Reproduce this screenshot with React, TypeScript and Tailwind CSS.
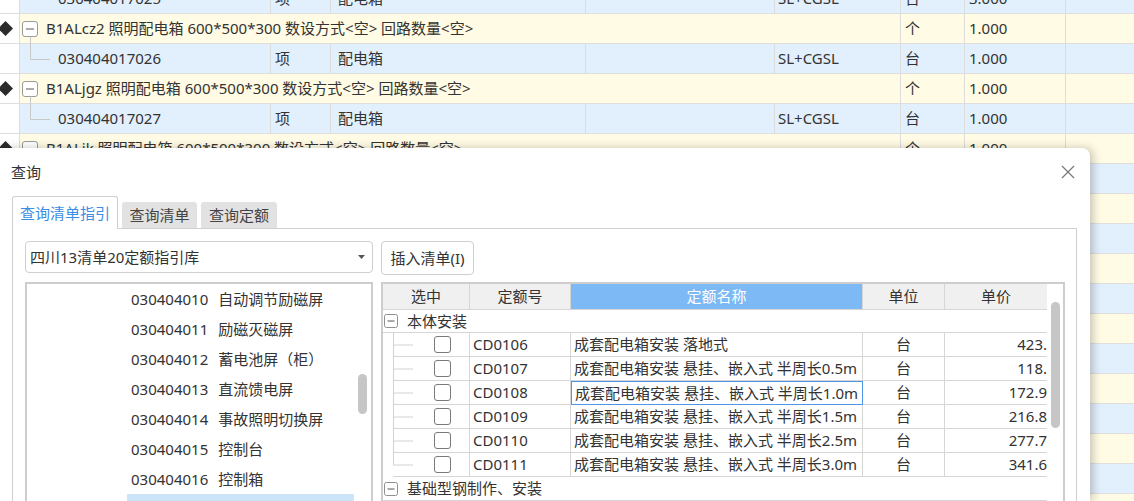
import React from 'react';

type BgRow =
  | { t: 'i'; code: string; qty: string }
  | { t: 'g'; name: string; qty: string };

const bgRows: BgRow[] = [
  { t: 'i', code: '030404017025', qty: '3.000' },
  { t: 'g', name: 'B1ALcz2 照明配电箱 600*500*300 数设方式<空> 回路数量<空>', qty: '1.000' },
  { t: 'i', code: '030404017026', qty: '1.000' },
  { t: 'g', name: 'B1ALjgz 照明配电箱 600*500*300 数设方式<空> 回路数量<空>', qty: '1.000' },
  { t: 'i', code: '030404017027', qty: '1.000' },
  { t: 'g', name: 'B1ALjk 照明配电箱 600*500*300 数设方式<空> 回路数量<空>', qty: '1.000' },
  { t: 'i', code: '', qty: '' },
  { t: 'g', name: '', qty: '' },
  { t: 'i', code: '', qty: '' },
  { t: 'g', name: '', qty: '' },
  { t: 'i', code: '', qty: '' },
  { t: 'g', name: '', qty: '' },
  { t: 'i', code: '', qty: '' },
  { t: 'g', name: '', qty: '' },
  { t: 'i', code: '', qty: '' },
  { t: 'g', name: '', qty: '' },
  { t: 'i', code: '', qty: '' },
  { t: 'g', name: '', qty: '' },
];

const listItems = [
  ['030404010', '自动调节励磁屏'],
  ['030404011', '励磁灭磁屏'],
  ['030404012', '蓄电池屏（柜）'],
  ['030404013', '直流馈电屏'],
  ['030404014', '事故照明切换屏'],
  ['030404015', '控制台'],
  ['030404016', '控制箱'],
  ['030404017', '配电箱'],
];

const gridRows = [
  ['CD0106', '成套配电箱安装 落地式', '台', '423.'],
  ['CD0107', '成套配电箱安装 悬挂、嵌入式 半周长0.5m', '台', '118.'],
  ['CD0108', '成套配电箱安装 悬挂、嵌入式 半周长1.0m', '台', '172.9'],
  ['CD0109', '成套配电箱安装 悬挂、嵌入式 半周长1.5m', '台', '216.8'],
  ['CD0110', '成套配电箱安装 悬挂、嵌入式 半周长2.5m', '台', '277.7'],
  ['CD0111', '成套配电箱安装 悬挂、嵌入式 半周长3.0m', '台', '341.6'],
];

function GroupBox() {
  return (
    <svg width="16" height="30" className="shrink-0">
      <rect x="0.5" y="7.5" width="15" height="15" rx="2.5" fill="white" stroke="#9a9a9a" />
      <line x1="4" y1="15" x2="12" y2="15" stroke="#555" strokeWidth="1" />
      <line x1="8.5" y1="22.5" x2="8.5" y2="30" stroke="#c9c9c9" strokeWidth="1" />
    </svg>
  );
}

function ItemTree() {
  return (
    <svg width="38" height="29" className="shrink-0">
      <line x1="10.5" y1="0" x2="10.5" y2="15.5" stroke="#c9c9c9" strokeWidth="1" />
      <line x1="10.5" y1="15.5" x2="30" y2="15.5" stroke="#c9c9c9" strokeWidth="1" />
    </svg>
  );
}

function Diamond() {
  return (
    <svg width="19" height="29" className="shrink-0">
      <polygon points="-2,14.5 5.5,7 13,14.5 5.5,22" fill="#2b2b2b" />
    </svg>
  );
}

function BackgroundTable() {
  return (
    <div className="-mt-[16px] flex flex-col">
      {bgRows.map((r, i) => {
        if (r.t === 'g') {
          return (
            <div key={i} className="flex h-[30px] border-b border-[#dedede] bg-[#fffbe4] text-[#333]">
              <div className="flex w-[20px] shrink-0 items-center border-r border-[#dcdcdc] bg-white">
                <Diamond />
              </div>
              <div className="flex w-[881px] shrink-0 items-center border-r border-[#dcdcdc] pl-[2px]">
                <GroupBox />
                <span className="ml-[8px] whitespace-pre">{r.name}</span>
              </div>
              <div className="flex w-[64px] shrink-0 items-center border-r border-[#dcdcdc] pl-[4px]">{r.qty ? '个' : ''}</div>
              <div className="flex w-[101px] shrink-0 items-center border-r border-[#dcdcdc] pl-[4px]">{r.qty}</div>
              <div className="flex-1" />
            </div>
          );
        }
        return (
          <div key={i} className="flex h-[30px] border-b border-[#dedede] bg-[#e2effc] text-[#333]">
            <div className="w-[20px] shrink-0 border-r border-[#dcdcdc] bg-white" />
            <div className="flex w-[251px] shrink-0 items-center border-r border-[#dcdcdc]">
              <ItemTree />
              <span>{r.code}</span>
            </div>
            <div className="flex w-[60px] shrink-0 items-center border-r border-[#dcdcdc] pl-[4px]">{r.code ? '项' : ''}</div>
            <div className="flex w-[255px] shrink-0 items-center border-r border-[#dcdcdc] pl-[7px]">{r.code ? '配电箱' : ''}</div>
            <div className="w-[189px] shrink-0 border-r border-[#dcdcdc]" />
            <div className="flex w-[126px] shrink-0 items-center border-r border-[#dcdcdc] pl-[3px]">{r.code ? 'SL+CGSL' : ''}</div>
            <div className="flex w-[64px] shrink-0 items-center border-r border-[#dcdcdc] pl-[4px]">{r.code ? '台' : ''}</div>
            <div className="flex w-[101px] shrink-0 items-center border-r border-[#dcdcdc] pl-[4px]">{r.qty}</div>
            <div className="flex-1" />
          </div>
        );
      })}
    </div>
  );
}

function SmallBox() {
  return (
    <svg width="14" height="14" className="shrink-0">
      <rect x="0.5" y="0.5" width="13" height="13" rx="2" fill="white" stroke="#8f8f8f" />
      <line x1="3.5" y1="7" x2="10.5" y2="7" stroke="#555" strokeWidth="1" />
    </svg>
  );
}

function RowTree({ last }: { last: boolean }) {
  return (
    <svg width="20" height="23" className="shrink-0">
      <line x1="0.5" y1="0" x2="0.5" y2={last ? 12 : 24} stroke="#d2d2d2" strokeWidth="1" />
      <line x1="0.5" y1="12" x2="20" y2="12" stroke="#d2d2d2" strokeWidth="1" />
    </svg>
  );
}

function Dialog() {
  return (
    <div className="absolute left-0 top-[148px] h-[353px] w-[1090px] overflow-hidden rounded-tr-[8px] bg-white text-[#333] shadow-[3px_0_10px_rgba(0,0,0,0.22)]">
      {/* header */}
      <div className="flex h-[48px] items-center justify-between pl-[11px] pr-[15px]">
        <span className="text-[15px]">查询</span>
        <svg width="14" height="14" viewBox="0 0 14 14">
          <line x1="1" y1="1" x2="13" y2="13" stroke="#7a7a7a" strokeWidth="1.3" />
          <line x1="13" y1="1" x2="1" y2="13" stroke="#7a7a7a" strokeWidth="1.3" />
        </svg>
      </div>
      {/* tabs */}
      <div className="flex h-[32px] items-end gap-[4px] pl-[12px]">
        <div className="relative z-10 -mb-[1px] flex h-[33px] w-[106px] items-center justify-center rounded-t-[3px] border border-b-0 border-[#cfcfcf] bg-white text-[#3a8ee6]">
          查询清单指引
        </div>
        <div className="flex h-[26px] w-[75px] items-center justify-center rounded-t-[3px] bg-[#e2e2e2] text-[#444]">
          查询清单
        </div>
        <div className="flex h-[26px] w-[76px] items-center justify-center rounded-t-[3px] bg-[#e2e2e2] text-[#444]">
          查询定额
        </div>
      </div>
      {/* panel */}
      <div className="ml-[12px] mr-[13px] h-[300px] border border-[#cfcfcf] p-[12px]">
        <div className="flex items-start gap-[8px]">
          <div className="flex h-[32px] w-[348px] items-center justify-between rounded-[4px] border border-[#cfcfcf] pl-[4px] pr-[7px]">
            <span>四川13清单20定额指引库</span>
            <svg width="7" height="4" viewBox="0 0 7 4">
              <polygon points="0,0 7,0 3.5,4" fill="#555" />
            </svg>
          </div>
          <div className="flex h-[34px] w-[93px] items-center justify-center rounded-[4px] border border-[#cfcfcf] bg-white">
            插入清单(I)
          </div>
        </div>
        <div className="mt-[7px] flex h-[240px] gap-[8px]">
          {/* left list */}
          <div className="flex w-[348px] shrink-0 border-2 border-[#cdcdcd]">
            <div className="flex flex-1 flex-col pl-[100px]">
              {listItems.map(([c, n], i) => (
                <div
                  key={c}
                  className={`flex h-[30px] shrink-0 items-center pl-[4px] ${i === 7 ? 'bg-[#cce4f8]' : ''}`}
                >
                  <span>{c}</span>
                  <span className="ml-[10px]">{n}</span>
                </div>
              ))}
            </div>
            <div className="w-[17px] shrink-0 pl-[4px] pt-[90px]">
              <div className="h-[40px] w-[9px] rounded-full bg-[#c6c6c6]" />
            </div>
          </div>
          {/* grid */}
          <div className="flex w-[684px] shrink-0 border-2 border-[#cdcdcd]">
            <div className="flex w-[664px] shrink-0 flex-col">
              <div className="flex h-[26px] shrink-0 border-b border-[#d6d6d6] bg-[#f0f0f0]">
                <div className="flex w-[87px] items-center justify-center border-r border-[#d6d6d6]">选中</div>
                <div className="flex w-[101px] items-center justify-center border-r border-[#d6d6d6]">定额号</div>
                <div className="flex w-[292px] items-center justify-center border-r border-[#d6d6d6] bg-[#7db9f5] text-white">定额名称</div>
                <div className="flex w-[82px] items-center justify-center border-r border-[#d6d6d6]">单位</div>
                <div className="flex w-[102px] items-center justify-center">单价</div>
              </div>
              <div className="flex h-[23px] shrink-0 items-center border-b border-[#d6d6d6] pl-[1px]">
                <SmallBox />
                <span className="ml-[9px]">本体安装</span>
              </div>
              {gridRows.map(([code, name, unit, price], i) => (
                <div key={code} className="flex h-[24px] shrink-0">
                  <div className="flex w-[87px] shrink-0 border-r border-[#d6d6d6] pl-[10px]">
                    <div className="flex flex-1 items-center border-b border-[#d6d6d6]">
                      <RowTree last={i === gridRows.length - 1} />
                      <div className="ml-[21px] h-[17px] w-[17px] rounded-[3px] border border-[#7a7a7a] bg-white" />
                    </div>
                  </div>
                  <div className="flex w-[101px] shrink-0 items-center border-b border-r border-[#d6d6d6] pl-[3px]">{code}</div>
                  <div
                    className={`flex w-[292px] shrink-0 items-center whitespace-nowrap pl-[3px] ${
                      i === 2 ? 'border border-[#4c95e8]' : 'border-b border-r border-[#d6d6d6]'
                    }`}
                  >
                    {name}
                  </div>
                  <div className="flex w-[82px] shrink-0 items-center justify-center border-b border-r border-[#d6d6d6]">{unit}</div>
                  <div className="flex w-[102px] shrink-0 items-center justify-end border-b border-[#d6d6d6]">{price}</div>
                </div>
              ))}
              <div className="flex h-[24px] shrink-0 items-center border-b border-[#d6d6d6] pl-[1px]">
                <SmallBox />
                <span className="ml-[9px]">基础型钢制作、安装</span>
              </div>
            </div>
            <div className="w-[16px] shrink-0 pl-[4px] pt-[18px]">
              <div className="h-[126px] w-[9px] rounded-full bg-[#c6c6c6]" />
            </div>
          </div>
        </div>
      </div>
    </div>
  );
}

export default function App() {
  return (
    <div className="relative h-[501px] w-[1134px] overflow-hidden bg-white font-['Noto_Sans','Noto_Sans_CJK_SC',sans-serif] text-[15px] leading-none">
      <BackgroundTable />
      <Dialog />
    </div>
  );
}
